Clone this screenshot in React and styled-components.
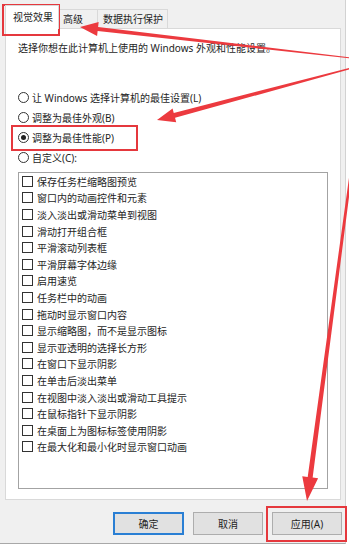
import styled, { createGlobalStyle } from 'styled-components'

const GlobalStyle = createGlobalStyle`
  body {
    margin: 0;
    background: #ffffff;
    font-family: "Noto Sans", "Noto Sans CJK SC", sans-serif;
    color: #1e1e1e;
  }
`

const Page = styled.div`
  position: relative;
  width: 349px;
  height: 547px;
  overflow: hidden;
`

const Window = styled.div`
  width: 346px;
  height: 544px;
  box-sizing: border-box;
  background: #f0f0f0;
  border-right: 1px solid #d2d2d2;
  border-bottom: 1px solid #a8a8a8;
  padding: 5px 0 0 5px;
  display: flex;
  flex-direction: column;
`

const TabRow = styled.div`
  display: flex;
  align-items: flex-end;
  height: 24px;
  margin-bottom: -1px;
`

const Tab = styled.div`
  box-sizing: border-box;
  width: ${p => p.$w}px;
  height: ${p => (p.$active ? 24 : 20)}px;
  margin-left: ${p => (p.$first ? 0 : -1)}px;
  padding-left: ${p => p.$pl}px;
  display: flex;
  align-items: center;
  font-size: 10px;
  line-height: 14px;
  border: 1px solid #d9d9d9;
  border-bottom: ${p => (p.$active ? 'none' : '1px solid #d9d9d9')};
  background: ${p => (p.$active ? '#ffffff' : '#f0f0f0')};
  position: ${p => (p.$active ? 'relative' : 'static')};
  z-index: ${p => (p.$active ? 1 : 'auto')};
  padding-bottom: ${p => (p.$active ? 2 : 0)}px;
`

const Panel = styled.div`
  box-sizing: border-box;
  width: 336px;
  height: 472px;
  background: #ffffff;
  border: 1px solid #d9d9d9;
  padding: 12px 12px 0 12px;
  display: flex;
  flex-direction: column;
`

const Description = styled.div`
  font-size: 10px;
  line-height: 14px;
`

const RadioGroup = styled.div`
  margin-top: 32px;
  display: flex;
  flex-direction: column;
`

const RadioRow = styled.div`
  height: 20px;
  display: flex;
  align-items: center;
  font-size: 10px;
`

const RadioDot = styled.span`
  box-sizing: border-box;
  width: 11px;
  height: 11px;
  margin-right: 3px;
  border-radius: 50%;
  border: 1px solid #333333;
  display: flex;
  align-items: center;
  justify-content: center;

  &::after {
    content: '';
    width: 5px;
    height: 5px;
    border-radius: 50%;
    background: ${p => (p.$on ? '#222222' : 'transparent')};
  }
`

const ListBox = styled.div`
  box-sizing: border-box;
  margin-top: 5px;
  width: 310px;
  height: 317px;
  border: 1px solid #a3a3a3;
  padding: 0 0 0 3px;
  display: flex;
  flex-direction: column;
`

const CheckRow = styled.div`
  height: 16.6px;
  display: flex;
  align-items: center;
  font-size: 10px;
`

const CheckBox = styled.span`
  box-sizing: border-box;
  width: 11px;
  height: 11px;
  margin-right: 4px;
  border: 1px solid #333333;
  background: #ffffff;
`

const ButtonRow = styled.div`
  display: flex;
  justify-content: flex-end;
  gap: 9px;
  margin-top: 12px;
  padding-right: 3px;
`

const Button = styled.div`
  box-sizing: border-box;
  width: ${p => p.$w}px;
  height: 23px;
  display: flex;
  align-items: center;
  justify-content: center;
  font-size: 10px;
  background: #e1e1e1;
  border: 1px solid ${p => (p.$default ? '#2a7fd4' : '#adadad')};
  box-shadow: ${p => (p.$default ? 'inset 0 0 0 1px #2a7fd4' : 'none')};
`

const Overlay = styled.svg`
  position: absolute;
  left: 0;
  top: 0;
  pointer-events: none;
`

const options = [
  { label: '让 Windows 选择计算机的最佳设置(L)' },
  { label: '调整为最佳外观(B)' },
  { label: '调整为最佳性能(P)', on: true },
  { label: '自定义(C):' },
]

const effects = [
  '保存任务栏缩略图预览',
  '窗口内的动画控件和元素',
  '淡入淡出或滑动菜单到视图',
  '滑动打开组合框',
  '平滑滚动列表框',
  '平滑屏幕字体边缘',
  '启用速览',
  '任务栏中的动画',
  '拖动时显示窗口内容',
  '显示缩略图，而不是显示图标',
  '显示亚透明的选择长方形',
  '在窗口下显示阴影',
  '在单击后淡出菜单',
  '在视图中淡入淡出或滑动工具提示',
  '在鼠标指针下显示阴影',
  '在桌面上为图标标签使用阴影',
  '在最大化和最小化时显示窗口动画',
]

// tapered arrow: thin tail, wider shaft near the head
const arrowPoints = (tail, tip, tw, sw, hl, hw) => {
  const dx = tip[0] - tail[0]
  const dy = tip[1] - tail[1]
  const len = Math.hypot(dx, dy)
  const ux = dx / len
  const uy = dy / len
  const nx = -uy
  const ny = ux
  const bx = tip[0] - ux * hl
  const by = tip[1] - uy * hl
  const pts = [
    [tail[0] + nx * tw / 2, tail[1] + ny * tw / 2],
    [bx + nx * sw / 2, by + ny * sw / 2],
    [bx + nx * hw, by + ny * hw],
    tip,
    [bx - nx * hw, by - ny * hw],
    [bx - nx * sw / 2, by - ny * sw / 2],
    [tail[0] - nx * tw / 2, tail[1] - ny * tw / 2],
  ]
  return pts.map(p => p.join(',')).join(' ')
}

const App = () => {
  return (
    <>
      <GlobalStyle />
      <Page>
        <Window>
          <TabRow>
            <Tab $w={54} $pl={7} $active $first>视觉效果</Tab>
            <Tab $w={40} $pl={4}>高级</Tab>
            <Tab $w={71} $pl={5}>数据执行保护</Tab>
          </TabRow>

          <Panel>
            <Description>选择你想在此计算机上使用的 Windows 外观和性能设置。</Description>

            <RadioGroup>
              {options.map(o => (
                <RadioRow key={o.label}>
                  <RadioDot $on={o.on} />
                  {o.label}
                </RadioRow>
              ))}
            </RadioGroup>

            <ListBox>
              {effects.map(e => (
                <CheckRow key={e}>
                  <CheckBox />
                  {e}
                </CheckRow>
              ))}
            </ListBox>
          </Panel>

          <ButtonRow>
            <Button $w={71} $default>确定</Button>
            <Button $w={70}>取消</Button>
            <Button $w={70}>应用(A)</Button>
          </ButtonRow>
        </Window>

        <Overlay width="349" height="547" viewBox="0 0 349 547">
          <g fill="none" stroke="#e5383d" strokeWidth="2">
            <rect x="3" y="5" width="56" height="30" />
            <rect x="12" y="126" width="125" height="24" />
            <rect x="267" y="507" width="79" height="34" />
          </g>
          <g fill="#ec3a3f">
            <polygon points={arrowPoints([352, 58], [80, 27], 1, 4, 18, 7)} />
            <polygon points={arrowPoints([352, 68], [157, 120], 1.5, 5, 18, 7)} />
            <polygon points={arrowPoints([366, 60], [307, 501], 1.5, 5, 24, 8)} />
          </g>
        </Overlay>
      </Page>
    </>
  )
}

export default App
